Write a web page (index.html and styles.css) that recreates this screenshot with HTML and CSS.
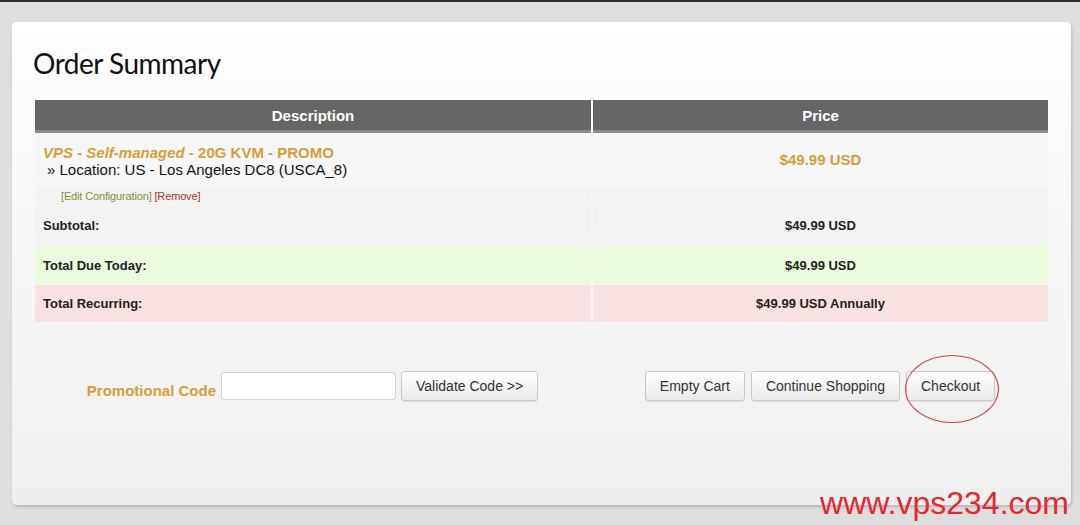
FILE: index.html
```html
<!DOCTYPE html>
<html lang="en">
<head>
    <meta charset="UTF-8">
    <title>Order Summary</title>
    <link rel="stylesheet" href="styles.css">
</head>
<body>
    <div class="page">
        <div class="summary">
            <h1>Order Summary</h1>

            <table class="cart">
                <thead>
                    <tr>
                        <th class="col-desc">Description</th>
                        <th>Price</th>
                    </tr>
                </thead>
                <tbody>
                    <tr class="item">
                        <td>
                            <div class="product"><em>VPS - Self-managed</em> - 20G KVM - PROMO</div>
                            <div class="option">&raquo; Location: US - Los Angeles DC8 (USCA_8)</div>
                        </td>
                        <td class="price product-price">$49.99 USD</td>
                    </tr>
                    <tr class="actions">
                        <td><a href="#" class="edit">[Edit Configuration]</a> <a href="#" class="remove">[Remove]</a></td>
                        <td></td>
                    </tr>
                    <tr class="subtotal">
                        <td class="label">Subtotal:</td>
                        <td class="price">$49.99 USD</td>
                    </tr>
                    <tr class="due">
                        <td class="label">Total Due Today:</td>
                        <td class="price">$49.99 USD</td>
                    </tr>
                    <tr class="recurring">
                        <td class="label">Total Recurring:</td>
                        <td class="price">$49.99 USD Annually</td>
                    </tr>
                </tbody>
            </table>

            <div class="cart-footer">
                <form class="promo">
                    <label for="promocode">Promotional Code</label>
                    <input type="text" id="promocode">
                    <button type="button">Validate Code &gt;&gt;</button>
                </form>
                <div class="cart-buttons">
                    <button type="button">Empty Cart</button>
                    <button type="button">Continue Shopping</button>
                    <span class="checkout-wrap">
                        <button type="button">Checkout</button>
                        <span class="circle"></span>
                    </span>
                </div>
            </div>

            <div class="watermark">www.vps234.com</div>
        </div>
    </div>
</body>
</html>
```

FILE: styles.css
```css
body {
    margin: 0;
    min-height: 523px;
    background-color: #dedede;
    border-top: 2px solid #2c2f24;
    font-family: 'Liberation Sans', Arial, sans-serif;
    color: #222;
}

.page {
    padding: 20px 9px 20px 12px;
}

.summary {
    position: relative;
    height: 483px;
    box-sizing: border-box;
    padding: 1px 23px 0 23px;
    background: linear-gradient(#ffffff, #fbfbfb 20%, #efefef);
    border-radius: 5px;
    box-shadow: 1px 2px 3px rgba(0, 0, 0, 0.18);
}

h1 {
    font-family: Lato, 'Open Sans', sans-serif;
    font-weight: 400;
    font-size: 28px;
    letter-spacing: -0.5px;
    color: #111;
    margin: 21px 0 17px -2px;
    line-height: 38px;
}

.cart {
    border-collapse: separate;
    border-spacing: 2px 1px;
    margin: 0 -2px;
    width: calc(100% + 4px);
    font-size: 13px;
}

.cart th {
    background-color: #666666;
    color: #ffffff;
    font-size: 15px;
    font-weight: bold;
    height: 30px;
    border-bottom: 3px solid #8c8c8c;
    padding: 0;
}

.cart .col-desc {
    width: 55%;
}

.cart td {
    padding: 0 8px;
    background-color: #f5f5f5;
}

.cart .price {
    text-align: center;
    font-weight: bold;
}

.item td {
    height: 51px;
    background-color: #f7f7f7;
}

.product {
    color: #d59e3a;
    font-weight: bold;
    font-size: 15px;
    margin-top: 2px;
}

.option {
    font-size: 15px;
    color: #111;
    padding-left: 4px;
}

.product-price {
    color: #d59e3a;
    font-size: 15px;
    padding-top: 2px;
}

.actions td {
    height: 19px;
    padding-left: 26px;
    font-size: 11px;
    letter-spacing: -0.15px;
    background-color: #f4f4f4;
}

.actions a {
    text-decoration: none;
}

.edit {
    color: #839030;
}

.remove {
    color: #a5352c;
}

.subtotal td {
    height: 39px;
    background-color: #f3f3f3;
}

.due td {
    height: 38px;
    background-color: #ebfcdd;
}

.recurring td {
    height: 37px;
    background-color: #f7e1e1;
}

.label {
    font-weight: bold;
}

.cart-footer {
    display: flex;
    margin-top: 48px;
}

.promo,
.cart-buttons {
    flex: 1;
    display: flex;
    justify-content: center;
    align-items: center;
    gap: 5px;
}

.promo {
    flex: 0 0 555px;
}

.promo label {
    color: #d59e3a;
    font-weight: bold;
    font-size: 15px;
    margin-top: 9px;
}

.promo input {
    width: 173px;
    height: 26px;
    box-sizing: content-box;
    padding: 0;
    border: 1px solid #d2d2d2;
    border-radius: 3px;
    background-color: #fff;
}

button {
    font-family: 'Liberation Sans', Arial, sans-serif;
    font-size: 14px;
    color: #333;
    height: 30px;
    padding: 0 14px;
    border: 1px solid #c8c8c8;
    border-radius: 3px;
    background: linear-gradient(#ffffff, #e9e9e9);
    box-shadow: 0 1px 1px rgba(0, 0, 0, 0.08);
}

.cart-buttons {
    gap: 6px;
    padding-left: 2px;
}

.checkout-wrap {
    position: relative;
    display: inline-block;
}

.checkout-wrap button {
    padding: 0 14px;
}

.circle {
    position: absolute;
    left: -1px;
    top: -16px;
    width: 92px;
    height: 66px;
    border: 1.5px solid #d0413a;
    border-radius: 50%;
}

.watermark {
    position: absolute;
    right: 2px;
    bottom: -16px;
    color: #e8262d;
    font-size: 32px;
    line-height: 36px;
}
```
